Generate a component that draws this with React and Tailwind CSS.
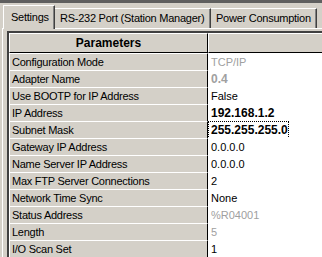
import React from 'react';

const rows = [
  { label: 'Configuration Mode', value: 'TCP/IP', tone: 'dim' },
  { label: 'Adapter Name', value: '0.4', tone: 'dimBold' },
  { label: 'Use BOOTP for IP Address', value: 'False' },
  { label: 'IP Address', value: '192.168.1.2', tone: 'bold' },
  { label: 'Subnet Mask', value: '255.255.255.0', tone: 'bold', focus: true },
  { label: 'Gateway IP Address', value: '0.0.0.0' },
  { label: 'Name Server IP Address', value: '0.0.0.0' },
  { label: 'Max FTP Server Connections', value: '2' },
  { label: 'Network Time Sync', value: 'None' },
  { label: 'Status Address', value: '%R04001', tone: 'dim' },
  { label: 'Length', value: '5', tone: 'dim' },
  { label: 'I/O Scan Set', value: '1' },
  { label: '', value: '' },
];

const toneClass = {
  dim: 'text-[#a0a0a0]',
  dimBold: 'text-[#a0a0a0] font-bold text-[12px]',
  bold: 'text-black font-bold text-[12px]',
};

function Tab({ label, active, width }) {
  if (active) {
    return (
      <div
        className="relative z-10 h-[24px] -mb-[1px] bg-[#d4d0c8] border-l border-t border-white border-r border-r-[#404040] shadow-[inset_-1px_0_0_#808080] flex items-center pl-[7px] text-[11px] tracking-[-0.25px] text-black whitespace-nowrap overflow-hidden"
        style={{ width }}
      >
        {label}
      </div>
    );
  }
  return (
    <div
      className="h-[20px] bg-[#d4d0c8] border-t border-white border-r border-r-[#404040] shadow-[inset_-1px_0_0_#808080] flex items-center pl-[5px] text-[11px] tracking-[-0.25px] text-black whitespace-nowrap overflow-hidden"
      style={{ width }}
    >
      {label}
    </div>
  );
}

export default function App() {
  return (
    <div className="w-[322px] h-[257px] overflow-hidden bg-[#d4d0c8] font-['Liberation_Sans',Arial,sans-serif] select-none">
      <div className="h-[3px] bg-[#5f5f5f]" />
      <div className="flex items-end h-[25px] pl-[3px]">
        <Tab label="Settings" active width={52} />
        <Tab label="RS-232 Port (Station Manager)" width={156} />
        <Tab label="Power Consumption" width={106} />
      </div>
      <div className="border-t border-l border-white ml-[2px] pt-[2px] pl-[4px]">
        <div className="border-t-2 border-l-2 border-t-[#404040] border-l-[#404040] w-[400px]">
          <div className="grid grid-cols-[199px_1fr] h-[20px]">
            <div className="bg-[#d4d0c8] border-t border-l border-white border-b border-r border-b-black border-r-black flex items-center justify-center font-bold text-[12px] text-black">
              Parameters
            </div>
            <div className="bg-[#d4d0c8] border-t border-l border-white border-b border-r border-b-black border-r-black" />
          </div>
          {rows.map((r, i) => (
            <div key={i} className="grid grid-cols-[199px_1fr] h-[17px]">
              <div className="bg-[#d4d0c8] border-t border-l border-white border-b border-r border-b-black border-r-black flex items-center pl-[2px] text-[11px] tracking-[-0.25px] text-black whitespace-nowrap">
                {r.label}
              </div>
              <div className="bg-white border-b border-dotted border-b-[#808080] flex items-center">
                <span
                  className={
                    'h-full flex items-center pl-[3px] pr-[1px] text-[11px] whitespace-nowrap ' +
                    (toneClass[r.tone] || 'text-black') +
                    (r.focus ? ' outline outline-1 outline-dotted outline-black -outline-offset-1' : '')
                  }
                >
                  {r.value}
                </span>
              </div>
            </div>
          ))}
        </div>
      </div>
    </div>
  );
}
